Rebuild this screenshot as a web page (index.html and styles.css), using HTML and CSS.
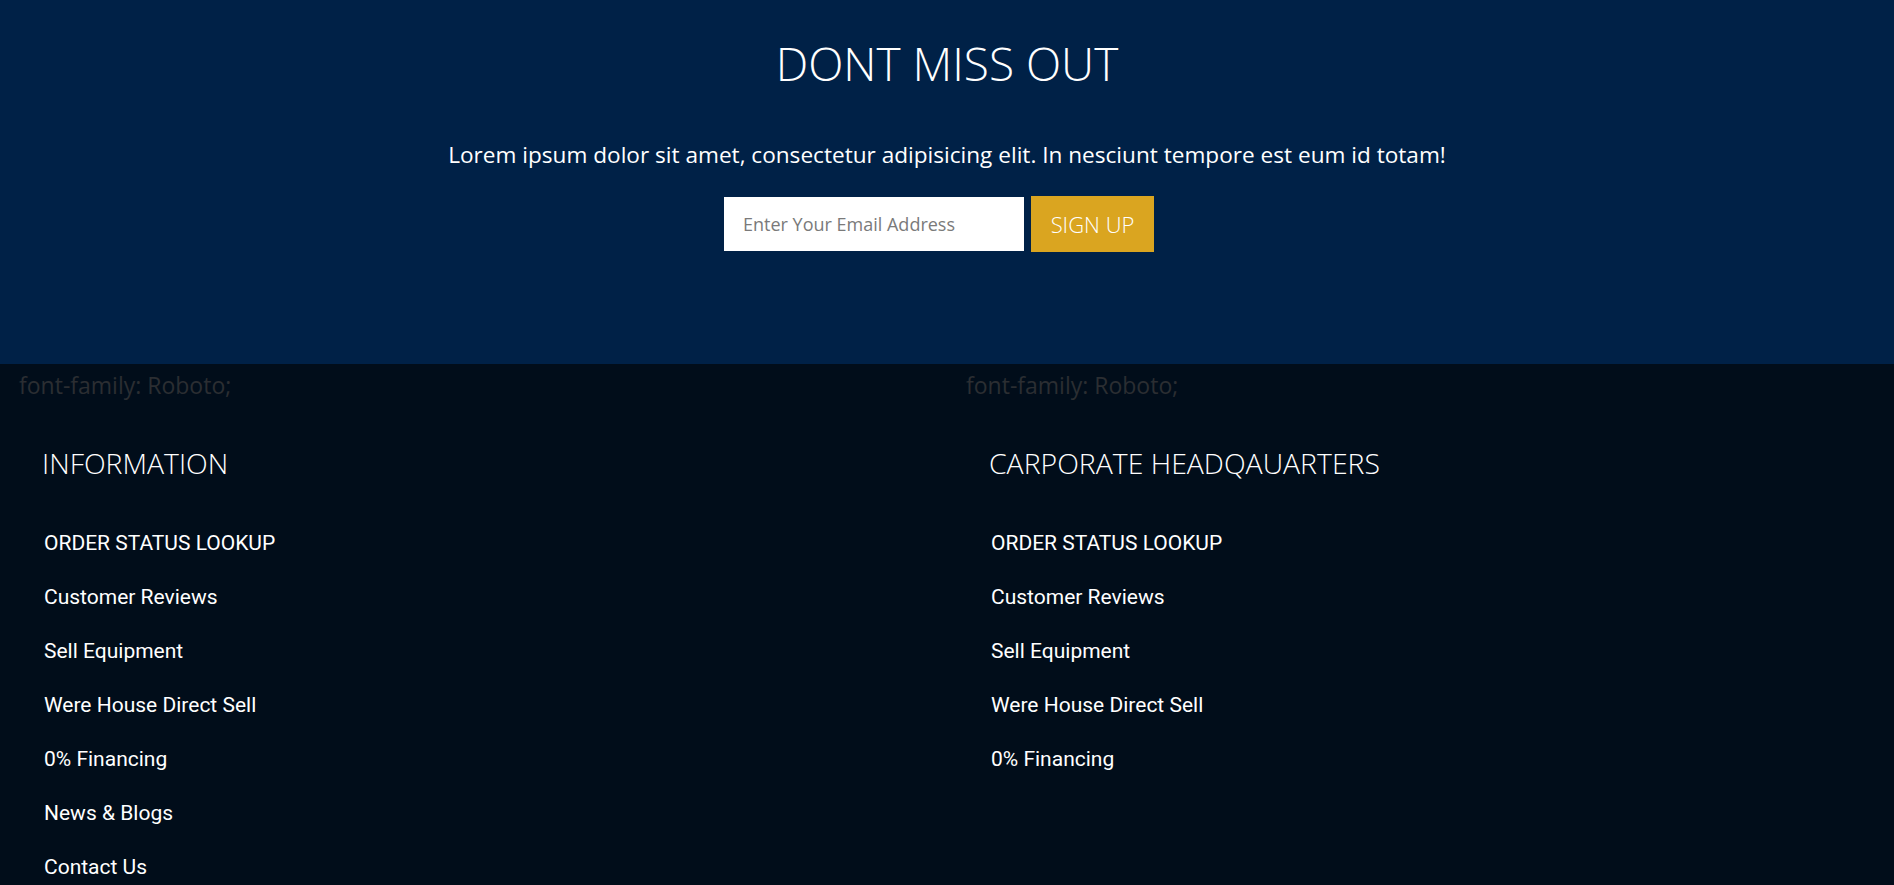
FILE: index.html
```html
<!DOCTYPE html>
<html lang="en">
<head>
<meta charset="utf-8">
<title>Dont Miss Out</title>
<link rel="stylesheet" href="styles.css">
</head>
<body>
<section class="hero">
  <h1 class="hero-title">DONT MISS OUT</h1>
  <p class="hero-text">Lorem ipsum dolor sit amet, consectetur adipisicing elit. In nesciunt tempore est eum id totam!</p>
  <form class="signup">
    <input class="signup-input" type="email" placeholder="Enter Your Email Address">
    <button class="signup-btn" type="button">SIGN UP</button>
  </form>
</section>
<footer class="footer">
  <div class="footer-col">
    <div class="note">font-family: Roboto;</div>
    <div class="block">
      <h2 class="block-title">INFORMATION</h2>
      <ul class="links">
        <li>ORDER STATUS LOOKUP</li>
        <li>Customer Reviews</li>
        <li>Sell Equipment</li>
        <li>Were House Direct Sell</li>
        <li>0% Financing</li>
        <li>News &amp; Blogs</li>
        <li>Contact Us</li>
      </ul>
    </div>
  </div>
  <div class="footer-col">
    <div class="note">font-family: Roboto;</div>
    <div class="block">
      <h2 class="block-title">CARPORATE HEADQAUARTERS</h2>
      <ul class="links">
        <li>ORDER STATUS LOOKUP</li>
        <li>Customer Reviews</li>
        <li>Sell Equipment</li>
        <li>Were House Direct Sell</li>
        <li>0% Financing</li>
      </ul>
    </div>
  </div>
</footer>
</body>
</html>
```
FILE: styles.css
```css
* { box-sizing: border-box; }
html, body { margin: 0; padding: 0; }
body {
  font-family: "Open Sans", "Noto Sans", sans-serif;
  background: #010d1a;
  color: #fff;
}
.hero {
  background: #002147;
  height: 364px;
  display: flex;
  flex-direction: column;
  align-items: center;
  padding-top: 35px;
}
.hero-title {
  margin: 0;
  font-weight: 300;
  font-size: 46px;
  line-height: 56px;
  letter-spacing: 0;
}
.hero-text {
  margin: 49px 0 0;
  font-size: 22.6px;
  line-height: 30px;
}
.signup {
  display: flex;
  align-items: center;
  gap: 7px;
  margin: 26px 16px 0 0;
}
.signup-input {
  width: 300px;
  height: 54px;
  border: 0;
  outline: 0;
  padding: 0 19px;
  font-family: "Open Sans", sans-serif;
  font-size: 18px;
  background: #fff;
}
.signup-input::placeholder { color: #7a7a7a; }
.signup-btn {
  width: 123px;
  height: 56px;
  border: 0;
  background: #daa520;
  color: #fff;
  font-family: "Open Sans", sans-serif;
  font-weight: 300;
  font-size: 22px;
  padding: 0;
}
.footer {
  display: grid;
  grid-template-columns: 1fr 1fr;
  min-height: 521px;
}
.footer-col { padding: 6px 0 0 19px; }
.note {
  color: #2b2e32;
  font-size: 23px;
  line-height: 30px;
}
.block { padding: 45px 0 0 23px; }
.block-title {
  margin: 0;
  font-weight: 300;
  font-size: 28.4px;
  line-height: 36px;
}
.links {
  list-style: none;
  margin: 35px 0 0;
  padding: 0 0 0 2px;
  font-family: Roboto, sans-serif;
  font-size: 21px;
}
.links li { line-height: 54px; height: 54px; }
```
